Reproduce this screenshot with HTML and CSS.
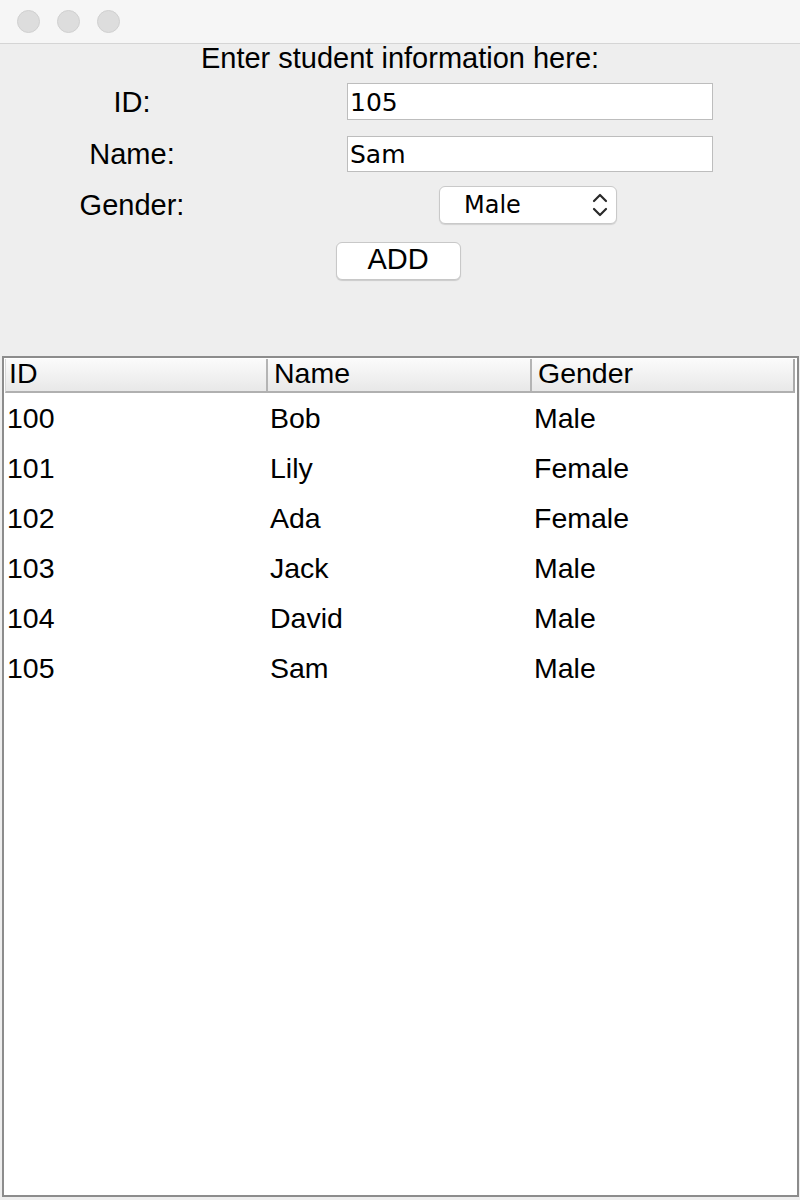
FILE: index.html
```html
<!DOCTYPE html>
<html>
<head>
<meta charset="utf-8">
<link rel="stylesheet" href="styles.css">
</head>
<body>
<div class="window">
  <div class="titlebar">
    <span class="light"></span><span class="light"></span><span class="light"></span>
  </div>
  <div class="form">
    <div class="heading">Enter student information here:</div>
    <div class="row row-id">
      <div class="label">ID:</div>
      <div class="field-cell"><div class="field">105</div></div>
    </div>
    <div class="row row-name">
      <div class="label">Name:</div>
      <div class="field-cell"><div class="field field-name">Sam</div></div>
    </div>
    <div class="row row-gender">
      <div class="label">Gender:</div>
      <div class="field-cell center">
        <div class="combo">
          <span class="combo-text">Male</span>
          <svg class="chev" width="16" height="26" viewBox="0 0 16 26">
            <path d="M2 9 L8 3 L14 9" fill="none" stroke="#2a2a2a" stroke-width="2.2" stroke-linecap="round" stroke-linejoin="round"/>
            <path d="M2 17 L8 23 L14 17" fill="none" stroke="#2a2a2a" stroke-width="2.2" stroke-linecap="round" stroke-linejoin="round"/>
          </svg>
        </div>
      </div>
    </div>
    <div class="btn-row"><div class="btn">ADD</div></div>
  </div>
  <div class="table">
    <div class="thead">
      <div class="th c1">ID</div>
      <div class="th c2">Name</div>
      <div class="th c3">Gender</div>
    </div>
    <div class="tbody">
      <div class="tr"><div class="td c1">100</div><div class="td c2">Bob</div><div class="td c3">Male</div></div>
      <div class="tr"><div class="td c1">101</div><div class="td c2">Lily</div><div class="td c3">Female</div></div>
      <div class="tr"><div class="td c1">102</div><div class="td c2">Ada</div><div class="td c3">Female</div></div>
      <div class="tr"><div class="td c1">103</div><div class="td c2">Jack</div><div class="td c3">Male</div></div>
      <div class="tr"><div class="td c1">104</div><div class="td c2">David</div><div class="td c3">Male</div></div>
      <div class="tr"><div class="td c1">105</div><div class="td c2">Sam</div><div class="td c3">Male</div></div>
    </div>
  </div>
</div>
</body>
</html>
```

FILE: styles.css
```css
html, body {
  margin: 0;
  padding: 0;
  background: #eeeeee;
}
.window {
  width: 800px;
  height: 1200px;
  display: flex;
  flex-direction: column;
  font-family: "Liberation Sans", Arial, sans-serif;
  color: #000;
  background: #eeeeee;
}
.titlebar {
  height: 43px;
  flex: none;
  background: #f6f6f6;
  border-bottom: 1px solid #d5d5d5;
  display: flex;
  align-items: center;
  gap: 17px;
  padding-left: 17px;
  box-sizing: content-box;
}
.light {
  width: 23px;
  height: 23px;
  border-radius: 50%;
  background: #dddddd;
  border: 1px solid #d0d0d0;
  box-sizing: border-box;
}
.form {
  height: 312px;
  flex: none;
  display: flex;
  flex-direction: column;
}
.heading {
  font-size: 29px;
  line-height: 28px;
  height: 28px;
  text-align: center;
  margin-top: 0;
}
.row {
  display: grid;
  grid-template-columns: 264px 366px;
  column-gap: 83px;
  align-items: center;
}
.row-id { margin-top: 11px; }
.row-name { margin-top: 16px; }
.row-gender { margin-top: 14px; }
.label {
  font-size: 29px;
  text-align: center;
  line-height: 32px;
}
.field-cell {
  display: flex;
}
.field-cell.center { justify-content: center; padding-right: 4px; }
.field {
  width: 366px;
  height: 37px;
  box-sizing: border-box;
  background: #fff;
  border: 1px solid #bdbdbd;
  font-family: "DejaVu Sans", sans-serif;
  font-size: 25px;
  line-height: 37px;
  padding-left: 2px;
}
.field-name { height: 36px; line-height: 36px; }
.combo {
  width: 178px;
  height: 38px;
  box-sizing: border-box;
  background: #fff;
  border: 1px solid #c9c9c9;
  border-radius: 6px;
  box-shadow: 0 1px 1px rgba(0,0,0,0.12);
  display: flex;
  align-items: center;
  padding-left: 24px;
  padding-right: 8px;
}
.combo-text {
  font-family: "DejaVu Sans", sans-serif;
  font-size: 24px;
  flex: 1;
  line-height: 38px;
}
.chev { flex: none; }
.btn-row {
  display: flex;
  justify-content: center;
  margin-top: 18px;
  padding-right: 4px;
}
.btn {
  width: 125px;
  height: 38px;
  box-sizing: border-box;
  background: #fff;
  border: 1px solid #c8c8c8;
  border-radius: 6px;
  box-shadow: 0 1px 1px rgba(0,0,0,0.15);
  font-size: 29px;
  line-height: 33px;
  text-align: center;
}
.table {
  flex: 1;
  margin: 0 1px 3px 2px;
  border: 2px solid #8c8c8c;
  background: #fff;
  display: flex;
  flex-direction: column;
  padding: 1px 1px 0 1px;
}
.thead {
  display: flex;
  height: 34px;
  margin-right: 1px;
  background: linear-gradient(#fbfbfb, #e8e8e8);
  border-left: 1px solid #d8d8d8;
  border-right: 2px solid #aaaaaa;
  border-bottom: 2px solid #b0b0b0;
  box-sizing: border-box;
  flex: none;
}
.th {
  font-size: 28.5px;
  line-height: 29px;
  padding-left: 3px;
  box-sizing: border-box;
}
.th.c2, .th.c3 { border-left: 2px solid #b4b4b4; padding-left: 6px; }
.c1 { width: 260px; }
.c2 { width: 264px; }
.c3 { flex: 1; }
.tr {
  display: flex;
  height: 50px;
  align-items: center;
}
.td {
  font-size: 28.5px;
  padding-left: 2px;
  box-sizing: border-box;
}
.td.c2, .td.c3 { padding-left: 5px; }
```
